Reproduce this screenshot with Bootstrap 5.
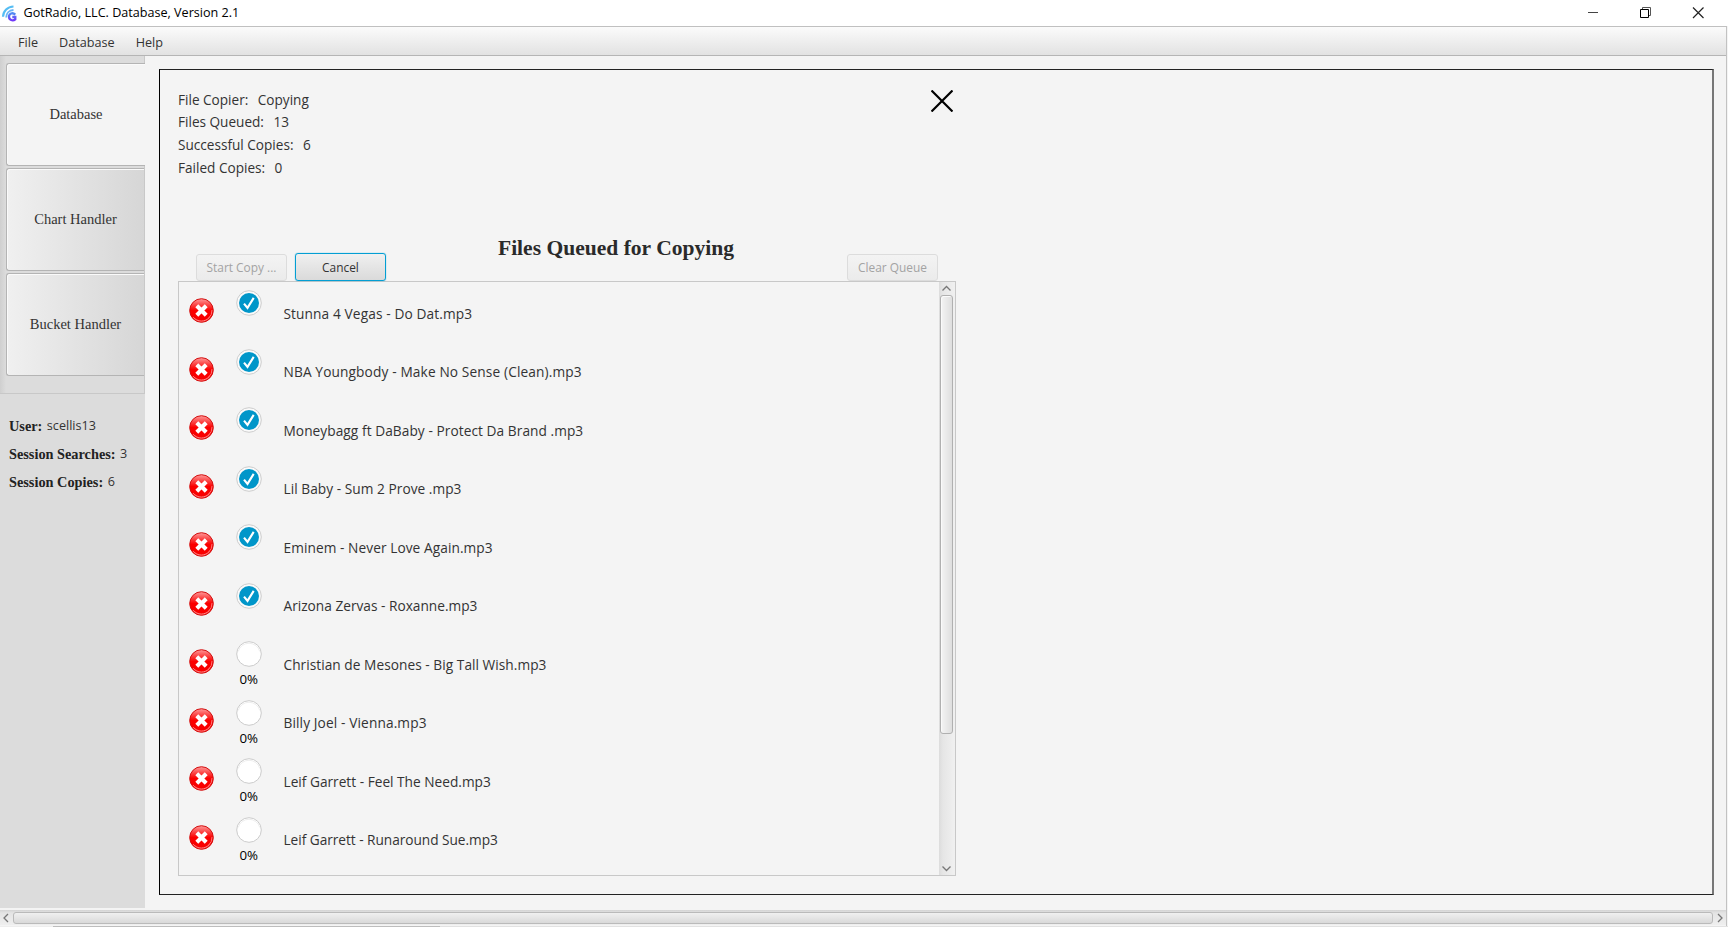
<!DOCTYPE html>
<html lang="en">
<head>
<meta charset="utf-8">
<title>GotRadio, LLC. Database, Version 2.1</title>
<link href="https://cdn.jsdelivr.net/npm/bootstrap@5.3.0/dist/css/bootstrap.min.css" rel="stylesheet">
<style>
body{font-family:"Open Sans","Noto Sans",sans-serif;font-size:13.7px;line-height:1;color:#333;background:#f4f4f4;width:1728px;height:927px;overflow:hidden}
svg{display:block;flex:none}
.titlebar{height:26px;background:#fff;color:#000;font-size:12.6px}
.shell{height:900px;border-top:1px solid #c0c0c0;border-right:1px solid #c2c2c2;width:1727px}
.menubar{height:29px;background:linear-gradient(#fbfbfb,#e2e2e2);border-bottom:1px solid #b5b5b5;font-size:12.65px;padding:2px 0 0 18px;gap:21px}
.workspace{height:854px}
.sidebar{width:145px;height:852px;background:#dcdcdc}
.tabstrip{height:338px;padding:7px 0 0 6px;gap:2px;background:linear-gradient(90deg,#cfcfcf,#dcdcdc 6px);border:solid #c8c8c8;border-width:0 1px 1px 0;font-family:"Liberation Serif",serif;font-size:14.5px}
.side-tab{height:103px;padding-bottom:1px;border:1px solid #b4b4b4;border-right:0;border-radius:3px 0 0 3px;box-shadow:inset 1px 1px 0 #fafafa;background:linear-gradient(90deg,#f0f0f0,#d6d6d6)}
.side-tab.current{background:#f4f4f4;margin-right:-1px;padding-bottom:0}
.session{padding:18px 0 0 9px;font-size:12.6px}
.session div{height:28px}
.session b{font-family:"Liberation Serif",serif;font-size:14.3px;margin-right:4.5px;color:#222}
.frame{width:1555px;height:826px;margin:13px 0 0 14px;border:1px solid #222;border-left-color:#000;border-right:2px solid #777;padding:18px 18px 0}
.status{font-size:13.6px;padding-top:.4px}
.status div{height:22.6px}
.status span{margin-left:9.5px}
.closer{margin:2.4px 3px 0 0}
.copier{width:778px}
.bar{height:32px;padding:0 18px 0 18px;margin-top:70.2px}
.heading{font:bold 21.55px/24px "Liberation Serif",serif;color:#2a2a2a;margin:0 0 21px -1px}
.fxbtn{--bs-btn-disabled-opacity:1;width:91px;height:27px;padding:1px 0 0;font-size:11.9px;line-height:1;border-radius:3px;border:1px solid #b5b5b5;background:linear-gradient(#f0f0f0,#dadada)!important;color:#333!important}
.fxbtn:disabled{border-color:#dcdcdc!important;background:linear-gradient(#f3f3f3,#ebebeb)!important;color:#a3a3a3!important}
.fxbtn.focused{border:1.5px solid #039ed3;height:28px;box-shadow:0 0 1px #039ed3}
.listbox{height:595px;border:1px solid #c8c8c8}
.entry{height:58.5px}
.kill{margin:16.4px 0 0 10px}
.prog{width:27px;margin:8.4px 0 0 21.3px;color:#000}
.prog small{font-size:13.3px;line-height:14px;margin-top:5px}
.track{margin-left:21.2px;margin-top:24.7px}
.vscroll{width:16px;background:linear-gradient(90deg,#dcdcdc,#e6e6e6 4px,#f0f0f0);padding:3px 0 4px}
.vthumb{width:13px;height:439px;margin:3px 0 0 1px;border:1px solid #b0b0b0;border-radius:3px;background:linear-gradient(90deg,#f4f4f4,#dedede);box-shadow:inset 1px 1px 0 #fafafa}
.hscroll{height:15px;background:linear-gradient(#d4d4d4,#e4e4e4 3px,#efefef);padding:0 3px}
.hthumb{height:12px;width:1700px;border:1px solid #bababa;border-radius:3px;background:linear-gradient(#f0f0f0,#d9d9d9)}
.foot{height:1px;background:linear-gradient(90deg,#eee 53px,#bdbdbd 53px 440px,#e2e2e2 440px)}
</style>
</head>
<body>
<svg width="0" height="0" class="position-absolute">
<defs>
<linearGradient id="red" x1="0" y1="0" x2="0" y2="1"><stop offset="0" stop-color="#ff9a9a"/><stop offset=".3" stop-color="#fb3a3a"/><stop offset=".5" stop-color="#fb0000"/><stop offset="1" stop-color="#f80000"/></linearGradient>
<linearGradient id="logo" x1="0" y1="0" x2="0" y2="1"><stop offset="0" stop-color="#4f8cf2"/><stop offset="1" stop-color="#7038f8"/></linearGradient>
<symbol id="kill" viewBox="0 0 25 25"><circle cx="12.5" cy="12.5" r="11.8" fill="url(#red)" stroke="#d31010" stroke-width="1"/><path d="M4.2 19.2A10.6 10.6 0 0 0 20.6 19.2" fill="none" stroke="#ff9a9a" stroke-width=".9"/><path d="M23 12a10.5 10.5 0 0 1-3.5 8.3" fill="none" stroke="#ff8080" stroke-width=".9"/><path d="M7.8 7.8l9.4 9.4M17.2 7.8l-9.4 9.4" stroke="#fff" stroke-width="4.1"/></symbol>
<symbol id="done" viewBox="0 0 26 26"><circle cx="13" cy="13" r="12.3" fill="#fafafa" stroke="#cdcdcd"/><circle cx="13" cy="13" r="10" fill="#0096c9"/><path d="M8 13.6l3.5 4.3 6.2-10" fill="none" stroke="#fff" stroke-width="2.1"/></symbol>
<symbol id="idle" viewBox="0 0 26 26"><circle cx="13" cy="13" r="12.3" fill="#fff" stroke="#cbcbcb"/><path d="M2.2 10.5A11.2 11.2 0 0 1 23.8 10.5" fill="none" stroke="#eee"/></symbol>
</defs>
</svg>
<header class="titlebar d-flex align-items-center">
<svg width="18" height="20" viewBox="0 0 18 20"><g fill="none"><path d="M3 13.8C3.3 8 7.500 3.800 13.500 3.500" stroke="#55bdf3" stroke-width="2.2"/><path d="M6.200 14.500c0-4 2.800-7.200 7.300-7.500" stroke="#6cb4f6" stroke-width="1.9"/><path d="M15.300 11.600C12.500 9 9 10.600 9 13.800s3.700 4.600 6.300 2.500v-2.300h-3" stroke="url(#logo)" stroke-width="2.3"/></g></svg>
<span class="flex-grow-1 ps-1" style="margin-left:1.5px;padding-top:1px">GotRadio, LLC. Database, Version 2.1</span>
<svg width="140" height="26" viewBox="0 0 140 26" fill="none" stroke="#222"><path d="M0 12.5h10" stroke="#444"/><path d="M54.5 9.5V7.5h8v8h-2.500" stroke="#555"/><path d="M52.500 9.500h8v8h-8z" stroke="#000"/><path d="M105 7.500l10.500 10.500M115.500 7.500l-10.500 10.500" stroke-width="1.2"/></svg>
</header>
<div class="shell">
<nav class="menubar d-flex align-items-center"><span>File</span><span>Database</span><span>Help</span></nav>
<div class="workspace d-flex">
<aside class="sidebar flex-shrink-0">
<div class="tabstrip d-flex flex-column">
<div class="side-tab current d-flex align-items-center justify-content-center">Database</div>
<div class="side-tab d-flex align-items-center justify-content-center">Chart Handler</div>
<div class="side-tab d-flex align-items-center justify-content-center">Bucket Handler</div>
</div>
<div class="session">
<div class="d-flex align-items-center"><b>User:</b>scellis13</div>
<div class="d-flex align-items-center"><b>Session Searches:</b>3</div>
<div class="d-flex align-items-center"><b>Session Copies:</b>6</div>
</div>
</aside>
<main class="frame flex-shrink-0">
<div class="copier">
<div class="d-flex justify-content-between">
<div class="status">
<div class="d-flex align-items-center">File Copier:<span>Copying</span></div>
<div class="d-flex align-items-center">Files Queued:<span>13</span></div>
<div class="d-flex align-items-center">Successful Copies:<span>6</span></div>
<div class="d-flex align-items-center">Failed Copies:<span>0</span></div>
</div>
<svg class="closer" width="22" height="22" viewBox="0 0 22 22" stroke="#000" stroke-width="2.2"><path d="M.5.5l21 21M21.5.5l-21 21"/></svg>
</div>
<div class="bar d-flex align-items-end">
<button class="btn fxbtn" disabled>Start Copy ...</button>
<button class="btn fxbtn focused ms-2">Cancel</button>
<h1 class="heading flex-grow-1 text-center">Files Queued for Copying</h1>
<button class="btn fxbtn" disabled>Clear Queue</button>
</div>
<div class="listbox d-flex">
<div class="flex-grow-1" id="queue"></div>
<div class="vscroll">
<svg width="16" height="7" viewBox="0 0 16 7" fill="none" stroke="#777" stroke-width="1.3"><path d="M3.500 5.500l4-4 4 4"/></svg>
<div class="vthumb"></div>
<svg style="margin-top:131px" width="16" height="7" viewBox="0 0 16 7" fill="none" stroke="#777" stroke-width="1.3"><path d="M3.500 1.500l4 4 4-4"/></svg>
</div>
</div>
</div>
</main>
</div>
<div class="hscroll d-flex align-items-center">
<svg width="10" height="12" viewBox="0 0 10 12" fill="none" stroke="#777" stroke-width="1.3"><path d="M5 2L1 6l4 4"/></svg>
<div class="hthumb"></div>
<svg width="10" height="12" viewBox="0 0 10 12" fill="none" stroke="#777" stroke-width="1.3"><path d="M5 2l4 4-4 4"/></svg>
</div>
</div>
<div class="foot"></div>
<script>
const files=[["Stunna 4 Vegas - Do Dat.mp3",.11],["NBA Youngbody - Make No Sense (Clean).mp3",.13],["Moneybagg ft DaBaby - Protect Da Brand .mp3",.06],["Lil Baby - Sum 2 Prove .mp3",.04],["Eminem - Never Love Again.mp3",.07],["Arizona Zervas - Roxanne.mp3",0],["Christian de Mesones - Big Tall Wish.mp3",.04],["Billy Joel - Vienna.mp3",.12],["Leif Garrett - Feel The Need.mp3",0],["Leif Garrett - Runaround Sue.mp3",-.04]];
document.getElementById("queue").innerHTML=files.map(([f,s],i)=>`<div class="entry d-flex align-items-start"><svg class="kill" width="25" height="25"><use href="#kill"/></svg><div class="prog d-flex flex-column align-items-center"><svg width="26" height="26"><use href="#${i<6?"done":"idle"}"/></svg>${i<6?"":"<small>0%</small>"}</div><span class="track" style="letter-spacing:${s}px">${f}</span></div>`).join("");
</script>
<script src="https://cdn.jsdelivr.net/npm/bootstrap@5.3.0/dist/js/bootstrap.bundle.min.js"></script>
</body>
</html>
